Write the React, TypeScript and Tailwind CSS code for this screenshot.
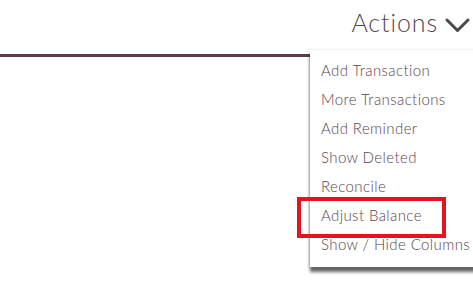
import React from 'react';

const MENU_ITEMS = [
  'Add Transaction',
  'More Transactions',
  'Add Reminder',
  'Show Deleted',
  'Reconcile',
  'Adjust Balance',
  'Show / Hide Columns',
];

const App: React.FC = () => {
  return (
    <div className="relative w-[473px] h-[300px] bg-white overflow-hidden font-['Lato',sans-serif] text-[#5b4450]">
      {/* Header */}
      <div className="flex justify-end items-center h-[45px] pr-[3px] pt-[1px]">
        <span className="text-[25px] font-light tracking-[0.9px]">Actions</span>
        <svg width="25" height="16" viewBox="0 0 25 16" className="ml-[7px] mt-[3px]" fill="none">
          <path d="M2 3l10.5 10.5L23 3" stroke="#4a4a4a" strokeWidth="3" strokeLinecap="round" strokeLinejoin="round" />
        </svg>
      </div>
      <div className="mt-[9px] h-[3px] bg-[#5a3c4a]" />

      {/* Dropdown */}
      <div className="absolute left-[310px] top-[50px] w-[180px] bg-white pt-[6px] pb-[8px] shadow-[0_5px_3px_rgba(0,0,0,0.6),-1px_0_3px_rgba(0,0,0,0.12)]">
        {MENU_ITEMS.map((item) => (
          <div key={item} className="pl-[11px] h-[29px] leading-[29px] text-[15px] font-light tracking-[0.4px] whitespace-nowrap">
            {item}
          </div>
        ))}
      </div>

      {/* Highlight */}
      <div className="absolute left-[297px] top-[197px] w-[149px] h-[41px] border-[4px] border-[#e3131f]" />
    </div>
  );
};

export default App;
